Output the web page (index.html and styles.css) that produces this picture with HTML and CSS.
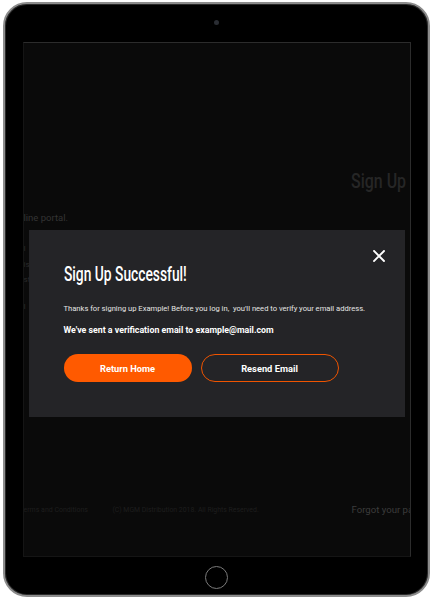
FILE: index.html
```html
<!DOCTYPE html>
<html>
<head>
<meta charset="utf-8">
<link rel="stylesheet" href="styles.css">
</head>
<body>
<div class="device">
  <div class="camera"></div>
  <div class="screen">
    <div class="page">
      <div class="page-head"><span class="narrow head-narrow">Sign Up</span></div>
      <p class="intro">line portal.</p>
      <p class="frag f1">I</p>
      <p class="frag f2">is</p>
      <p class="frag f3">st</p>
      <p class="frag f4">I</p>
      <div class="page-foot">
        <span class="terms">erms and Conditions</span>
        <span class="copy">(C) MGM Distribution 2018. All Rights Reserved.</span>
        <span class="forgot">Forgot your password?</span>
      </div>
    </div>
    <div class="modal">
      <button class="close" aria-label="Close">
        <svg viewBox="0 0 12 12" width="12" height="12"><path d="M1 1L11 11M11 1L1 11" stroke="#fff" stroke-width="1.9" stroke-linecap="square"/></svg>
      </button>
      <h2 class="modal-title"><span class="narrow">Sign Up Successful!</span></h2>
      <p class="modal-text">Thanks for signing up Example! Before you log in,&nbsp; you'll need to verify your email address.</p>
      <p class="modal-strong">We've sent a verification email to example@mail.com</p>
      <div class="actions">
        <button class="btn btn-primary">Return Home</button>
        <button class="btn btn-outline">Resend Email</button>
      </div>
    </div>
  </div>
  <div class="home"></div>
</div>
</body>
</html>
```

FILE: styles.css
```css
* { box-sizing: border-box; }
html, body { margin: 0; padding: 0; background: #fff; }
body { font-family: Roboto, "Liberation Sans", sans-serif; }

.device {
  margin: 2px 3px 0 3px;
  width: 427px;
  height: 595px;
  background: #000;
  border: 2px solid #8c8c8c;
  border-radius: 24px;
  box-shadow: inset 0 0 0 1px #2a2a2a;
  display: flex;
  flex-direction: column;
  align-items: center;
}
.camera {
  margin-top: 16px;
  width: 5px;
  height: 5px;
  border-radius: 50%;
  background: #2a2d33;
}
.screen {
  margin-top: 17px;
  width: 388px;
  height: 515px;
  background: #0a0a0a;
  border: 1px solid #2c2c2c;
  border-left-color: #151515;
  border-bottom-color: #151515;
  position: relative;
  overflow: hidden;
}
.home {
  margin-top: 9px;
  width: 23px;
  height: 23px;
  border-radius: 50%;
  border: 1.5px solid #7a7a7a;
}

.narrow {
  display: inline-block;
  transform: scaleX(0.69);
  transform-origin: left center;
  white-space: nowrap;
}
.head-narrow { transform: scaleX(0.76); }

/* dimmed background page */
.page { height: 100%; display: flex; flex-direction: column; }
.page-head {
  margin-top: 125px;
  padding-left: 327px;
  font-family: Roboto, sans-serif;
  font-weight: 500;
  font-size: 21px;
  line-height: 26px;
  color: #262626;
  white-space: nowrap;
}
.intro { margin: 18px 0 0 0; font-size: 9.5px; color: #343434; }
.frag { margin: 0; font-size: 8px; color: #2a2a2a; line-height: 15.5px; }
.f1 { margin-top: 18px; }
.f4 { margin-top: 11px; }
.page-foot {
  margin-top: auto;
  margin-bottom: 41px;
  display: flex;
  align-items: center;
  white-space: nowrap;
  font-size: 7px;
  color: #1e1e1e;
}
.page-foot span { flex-shrink: 0; }
.terms { width: 89px; }
.copy { width: 239px; font-size: 6.9px; }
.forgot { font-size: 9.6px; color: #3c3c3c; }

/* modal */
.modal {
  position: absolute;
  left: 5px;
  top: 187px;
  width: 376px;
  height: 187px;
  background: #242427;
  padding: 32px 0 0 35px;
  color: #fff;
}
.close {
  position: absolute;
  right: 20px;
  top: 20px;
  width: 12px;
  height: 12px;
  padding: 0;
  border: 0;
  background: none;
  display: block;
}
.close svg { display: block; }
.modal-title {
  margin: 0;
  font-family: Roboto, sans-serif;
  font-weight: 500;
  font-size: 20px;
  line-height: 24px;
}
.modal-text {
  margin: 18px 0 0 0;
  font-size: 7.6px;
  line-height: 10px;
  color: #e4e4e4;
}
.modal-strong {
  margin: 11px 0 0 0;
  font-size: 8.8px;
  font-weight: 700;
  line-height: 11px;
}
.actions { display: flex; gap: 9px; margin-top: 18px; }
.btn {
  height: 28px;
  border-radius: 14px;
  font-family: Roboto, "Liberation Sans", sans-serif;
  font-size: 9.3px;
  font-weight: 700;
  color: #fff;
  padding: 0;
}
.btn-primary { width: 128px; background: #ff5a00; border: 0; }
.btn-outline { width: 138px; background: transparent; border: 1.5px solid #f05400; }
```
